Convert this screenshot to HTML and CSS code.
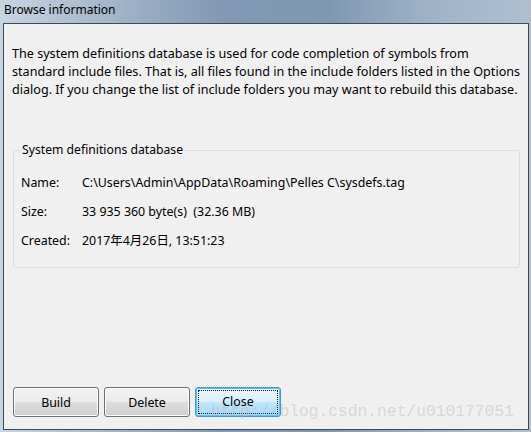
FILE: index.html
```html
<!DOCTYPE html>
<html>
<head>
<meta charset="utf-8">
<link rel="stylesheet" href="styles.css">
</head>
<body>
<div class="window">
  <div class="titlebar">Browse information</div>
  <div class="client">
    <p class="intro">The system definitions database is used for code completion of symbols from standard include files. That is, all files found in the include folders listed in the Options dialog. If you change the list of include folders you may want to rebuild this database.</p>
    <fieldset class="group">
      <legend class="legend">System definitions database</legend>
      <div class="row"><span class="label">Name:</span><span class="value">C:\Users\Admin\AppData\Roaming\Pelles C\sysdefs.tag</span></div>
      <div class="row"><span class="label">Size:</span><span class="value">33 935 360 byte(s)&nbsp; (32.36 MB)</span></div>
      <div class="row"><span class="label">Created:</span><span class="value">2017年4月26日, 13:51:23</span></div>
    </fieldset>
    <div class="buttons">
      <button class="btn">Build</button>
      <button class="btn">Delete</button>
      <button class="btn focused"><span class="focusrect">Close</span></button>
    </div>
    <div class="watermark">http://blog.csdn.net/u010177051</div>
  </div>
</div>
</body>
</html>
```
FILE: styles.css
```css
html, body {
  margin: 0;
  padding: 0;
}
body {
  width: 531px;
  height: 432px;
  overflow: hidden;
  font-family: "Noto Sans", "Noto Sans CJK SC", sans-serif;
  font-size: 12.4px;
  color: #000;
}
.window {
  width: 531px;
  height: 432px;
  box-sizing: border-box;
  display: flex;
  flex-direction: column;
  background: linear-gradient(90deg, #c8d5e2 0px, #a9bbce 90px, #8199b4 220px, #7f98b2 330px, #9fb3c8 430px, #aebfd1 531px);
}
.titlebar {
  height: 23px;
  line-height: 20px;
  padding-left: 4px;
  font-size: 12px;
  color: #000;
}
.client {
  position: relative;
  flex: 1;
  margin: 0 2px 2px 3px;
  border: 1px solid #3f4a56;
  background: #f0f0f0;
  display: flex;
  flex-direction: column;
}
.intro {
  margin: 21px 0 0 8px;
  width: 510px;
  font-size: 12.6px;
  line-height: 17.8px;
}
.group {
  margin: 45px 8px 0 9px;
  padding: 0 0 0 7px;
  border: 1px solid #d5dfe5;
  border-radius: 3px;
  height: 125px;
  box-sizing: border-box;
}
.legend {
  padding: 0 2px 0 1px;
  margin-left: 0;
  line-height: 14px;
  font-size: 12.2px;
}
.row {
  display: flex;
  height: 29px;
  line-height: 29px;
}
.row:first-of-type {
  margin-top: 11px;
}
.label {
  width: 61px;
}
.buttons {
  margin-top: auto;
  margin-bottom: 12px;
  margin-left: 9px;
  display: flex;
  gap: 5px;
}
.btn {
  width: 86px;
  height: 30px;
  border: 1px solid #707070;
  border-radius: 3px;
  background: linear-gradient(180deg, #f3f3f3 0%, #ebebeb 48%, #dddddd 52%, #cfcfcf 100%);
  box-shadow: inset 0 0 0 1px #fcfcfc;
  font-family: "Noto Sans", sans-serif;
  font-size: 12.4px;
  color: #000;
  padding: 0;
}
.btn.focused {
  border-color: #3c9ad6;
  background: linear-gradient(180deg, #eaf6fd 0%, #d9f0fc 48%, #bee6fd 52%, #a7d9f5 100%);
  box-shadow: inset 0 0 0 1px #5ec2ee;
  padding: 2px;
}
.focusrect {
  display: block;
  height: 100%;
  box-sizing: border-box;
  border: 1px dotted #1a1a1a;
  line-height: 22px;
}
.watermark {
  position: absolute;
  left: 207px;
  top: 378px;
  font-family: "Liberation Mono", monospace;
  font-size: 16.3px;
  color: rgba(190, 190, 190, 0.5);
  white-space: nowrap;
}
```
